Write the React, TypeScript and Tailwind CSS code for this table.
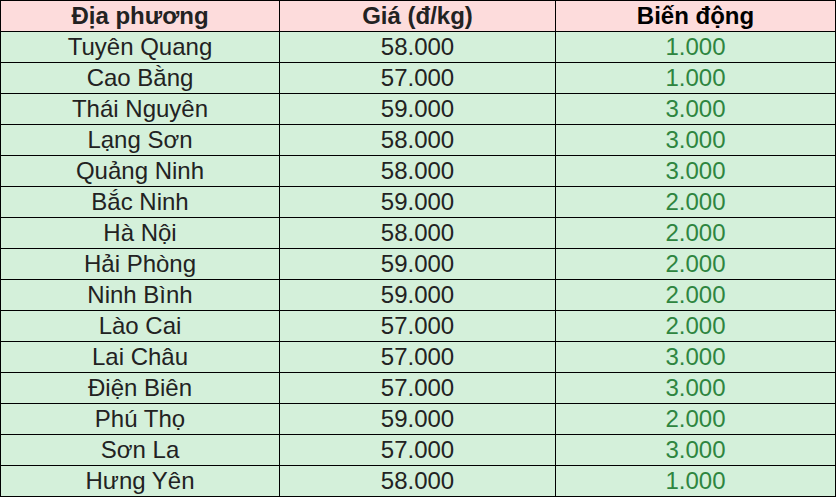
import React from "react";

const rows: [string, string, string][] = [
  ["Tuyên Quang", "58.000", "1.000"],
  ["Cao Bằng", "57.000", "1.000"],
  ["Thái Nguyên", "59.000", "3.000"],
  ["Lạng Sơn", "58.000", "3.000"],
  ["Quảng Ninh", "58.000", "3.000"],
  ["Bắc Ninh", "59.000", "2.000"],
  ["Hà Nội", "58.000", "2.000"],
  ["Hải Phòng", "59.000", "2.000"],
  ["Ninh Bình", "59.000", "2.000"],
  ["Lào Cai", "57.000", "2.000"],
  ["Lai Châu", "57.000", "3.000"],
  ["Điện Biên", "57.000", "3.000"],
  ["Phú Thọ", "59.000", "2.000"],
  ["Sơn La", "57.000", "3.000"],
  ["Hưng Yên", "58.000", "1.000"],
];

export default function App() {
  return (
    <div className="w-[837px] h-[498px] bg-white" style={{ fontFamily: '"Liberation Sans", Arial, sans-serif' }}>
      <div className="grid grid-cols-[278px_275px_279px] auto-rows-[30px] gap-px bg-black p-px w-[836px] text-[24px] leading-[30px] text-center text-[#222]">
        <div className="bg-[#fddcdc] font-bold">Địa phương</div>
        <div className="bg-[#fddcdc] font-bold">Giá (đ/kg)</div>
        <div className="bg-[#fddcdc] font-bold text-black">Biến động</div>
        {rows.map(([a, b, c]) => (
          <React.Fragment key={a}>
            <div className="bg-[#d4f0da]">{a}</div>
            <div className="bg-[#d4f0da]">{b}</div>
            <div className="bg-[#d4f0da] text-[#2e8540]">{c}</div>
          </React.Fragment>
        ))}
      </div>
    </div>
  );
}
